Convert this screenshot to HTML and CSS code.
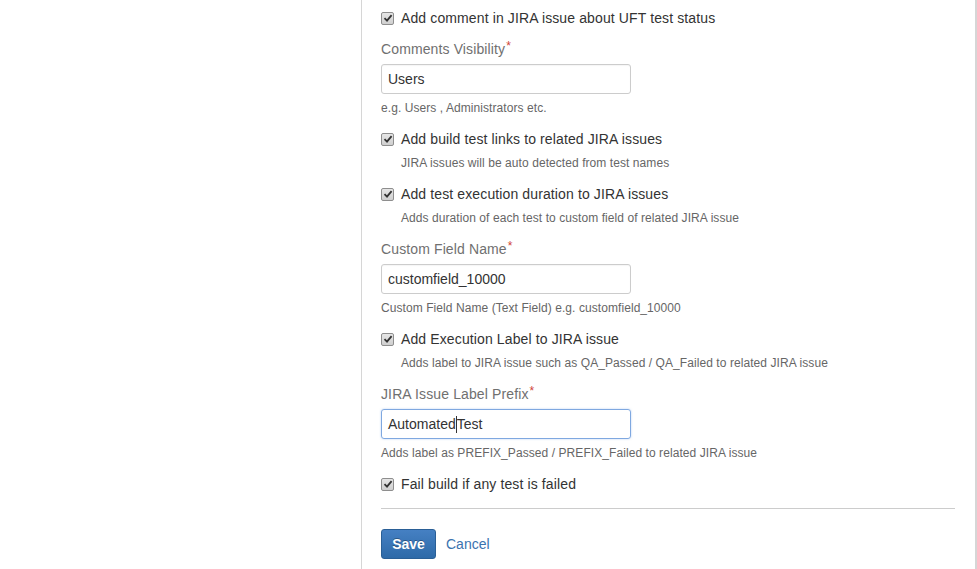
FILE: index.html
```html
<!DOCTYPE html>
<html>
<head>
<meta charset="utf-8">
<link rel="stylesheet" href="styles.css">
</head>
<body>
<div class="page">
  <div class="side"></div>
  <div class="panel">
    <div class="check first"><span class="box"><svg width="10" height="10" viewBox="0 0 10 10"><path d="M1.5 5.2 L4 7.6 L8.6 2.2" fill="none" stroke="#333" stroke-width="1.8"/></svg></span><span>Add comment in JIRA issue about UFT test status</span></div>

    <div class="group">
      <div class="label">Comments Visibility<span class="req">*</span></div>
      <div class="input">Users</div>
      <div class="hint">e.g. Users , Administrators etc.</div>
    </div>

    <div class="group">
      <div class="check"><span class="box"><svg width="10" height="10" viewBox="0 0 10 10"><path d="M1.5 5.2 L4 7.6 L8.6 2.2" fill="none" stroke="#333" stroke-width="1.8"/></svg></span><span>Add build test links to related JIRA issues</span></div>
      <div class="hint indent">JIRA issues will be auto detected from test names</div>
    </div>

    <div class="group">
      <div class="check"><span class="box"><svg width="10" height="10" viewBox="0 0 10 10"><path d="M1.5 5.2 L4 7.6 L8.6 2.2" fill="none" stroke="#333" stroke-width="1.8"/></svg></span><span>Add test execution duration to JIRA issues</span></div>
      <div class="hint indent">Adds duration of each test to custom field of related JIRA issue</div>
    </div>

    <div class="group">
      <div class="label">Custom Field Name<span class="req">*</span></div>
      <div class="input">customfield_10000</div>
      <div class="hint">Custom Field Name (Text Field) e.g. customfield_10000</div>
    </div>

    <div class="group">
      <div class="check"><span class="box"><svg width="10" height="10" viewBox="0 0 10 10"><path d="M1.5 5.2 L4 7.6 L8.6 2.2" fill="none" stroke="#333" stroke-width="1.8"/></svg></span><span>Add Execution Label to JIRA issue</span></div>
      <div class="hint indent">Adds label to JIRA issue such as QA_Passed / QA_Failed to related JIRA issue</div>
    </div>

    <div class="group">
      <div class="label">JIRA Issue Label Prefix<span class="req">*</span></div>
      <div class="input focus">Automated<span class="caret"></span>Test</div>
      <div class="hint">Adds label as PREFIX_Passed / PREFIX_Failed to related JIRA issue</div>
    </div>

    <div class="check last"><span class="box"><svg width="10" height="10" viewBox="0 0 10 10"><path d="M1.5 5.2 L4 7.6 L8.6 2.2" fill="none" stroke="#333" stroke-width="1.8"/></svg></span><span>Fail build if any test is failed</span></div>

    <div class="rule"></div>

    <div class="actions">
      <button class="save">Save</button>
      <a class="cancel" href="#">Cancel</a>
    </div>
  </div>
</div>
</body>
</html>
```

FILE: styles.css
```css
html, body {
  margin: 0;
  padding: 0;
  background: #fff;
  font-family: "Liberation Sans", Arial, sans-serif;
  color: #333;
}
.page {
  display: flex;
  height: 569px;
  overflow: hidden;
}
.side {
  width: 361px;
  flex: none;
}
.panel {
  width: 574px;
  flex: none;
  border-left: 1px solid #d6d6d6;
  border-right: 2px solid #d6d6d6;
  padding: 8px 20px 0 19px;
}
.check {
  display: flex;
  align-items: center;
  height: 20px;
  font-size: 14px;
  letter-spacing: 0.12px;
}
.check.first { margin-bottom: 11px; }
.check.last { margin-bottom: 14px; }
.box {
  width: 11px;
  height: 11px;
  border: 1px solid #8e8e8e;
  border-radius: 2px;
  background: linear-gradient(#e6e6e6, #cfcfcf);
  margin-right: 7px;
  display: flex;
  align-items: center;
  justify-content: center;
  flex: none;
}
.box svg { display: block; }
.group { margin-bottom: 13px; }
.label {
  font-size: 14px;
  line-height: 20px;
  color: #707070;
  margin-bottom: 5px;
  letter-spacing: 0.12px;
}
.req {
  color: #d04437;
  font-size: 12px;
  vertical-align: top;
  position: relative;
  top: -3px;
  margin-left: 1px;
}
.input {
  box-sizing: border-box;
  width: 250px;
  height: 30px;
  border: 1px solid #ccc;
  border-radius: 3px;
  padding: 0 6px;
  font-size: 14px;
  line-height: 28px;
  color: #333;
  box-shadow: inset 0 1px 1px rgba(0,0,0,0.04);
}
.input.focus {
  border-color: #7fa8e0;
  box-shadow: 0 0 2px rgba(102,155,233,0.5);
}
.caret {
  display: inline-block;
  width: 1px;
  height: 17px;
  background: #333;
  vertical-align: middle;
  margin-top: -2px;
}
.hint {
  font-size: 12px;
  line-height: 16px;
  color: #666;
  margin-top: 6px;
  letter-spacing: 0.07px;
}
.hint.indent { padding-left: 20px; }
.rule {
  height: 1px;
  background: #ccc;
  margin-bottom: 20px;
}
.actions {
  display: flex;
  align-items: center;
  gap: 10px;
}
.save {
  width: 55px;
  height: 30px;
  border: 1px solid #2a5f96;
  border-radius: 3px;
  background: linear-gradient(#4580c3, #2e6aa8);
  color: #fff;
  font-family: "Liberation Sans", Arial, sans-serif;
  font-weight: bold;
  font-size: 14px;
  text-shadow: 0 -1px 0 rgba(0,0,0,0.3);
  padding: 0;
}
.cancel {
  color: #3b73af;
  font-size: 14px;
  text-decoration: none;
}
```
